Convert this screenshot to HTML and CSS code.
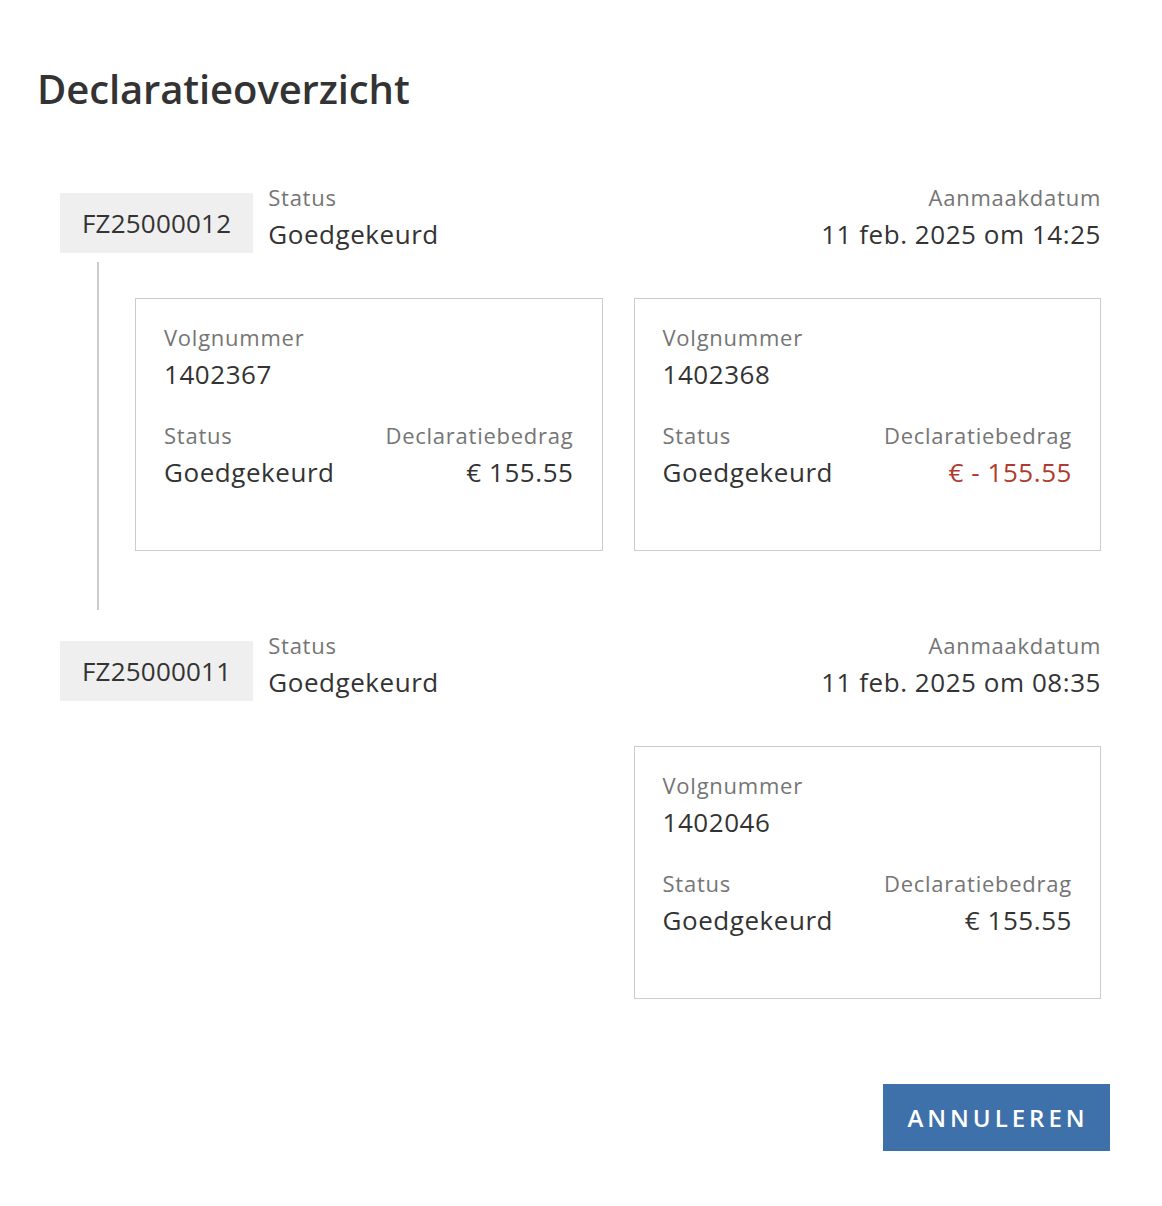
FILE: index.html
```html
<!DOCTYPE html>
<html lang="nl">
<head>
<meta charset="utf-8">
<title>Declaratieoverzicht</title>
<link rel="stylesheet" href="styles.css">
</head>
<body>
<div class="page">
  <h1 class="title">Declaratieoverzicht</h1>
  <div class="list">
    <div class="group">
      <div class="group-head">
        <div class="badge">FZ25000012</div>
        <div class="field status-field">
          <div class="label">Status</div>
          <div class="value">Goedgekeurd</div>
        </div>
        <div class="field date-field">
          <div class="label">Aanmaakdatum</div>
          <div class="value">11 feb. 2025 om 14:25</div>
        </div>
      </div>
      <div class="children">
        <div class="cards">
          <div class="card">
            <div class="label">Volgnummer</div>
            <div class="value">1402367</div>
            <div class="card-row">
              <div class="field">
                <div class="label">Status</div>
                <div class="value">Goedgekeurd</div>
              </div>
              <div class="field amount">
                <div class="label">Declaratiebedrag</div>
                <div class="value">€ 155.55</div>
              </div>
            </div>
          </div>
          <div class="card">
            <div class="label">Volgnummer</div>
            <div class="value">1402368</div>
            <div class="card-row">
              <div class="field">
                <div class="label">Status</div>
                <div class="value">Goedgekeurd</div>
              </div>
              <div class="field amount">
                <div class="label">Declaratiebedrag</div>
                <div class="value negative">€ - 155.55</div>
              </div>
            </div>
          </div>
        </div>
      </div>
    </div>
    <div class="group last">
      <div class="group-head">
        <div class="badge">FZ25000011</div>
        <div class="field status-field">
          <div class="label">Status</div>
          <div class="value">Goedgekeurd</div>
        </div>
        <div class="field date-field">
          <div class="label">Aanmaakdatum</div>
          <div class="value">11 feb. 2025 om 08:35</div>
        </div>
      </div>
      <div class="children">
        <div class="cards">
          <div class="card col-2">
            <div class="label">Volgnummer</div>
            <div class="value">1402046</div>
            <div class="card-row">
              <div class="field">
                <div class="label">Status</div>
                <div class="value">Goedgekeurd</div>
              </div>
              <div class="field amount">
                <div class="label">Declaratiebedrag</div>
                <div class="value">€ 155.55</div>
              </div>
            </div>
          </div>
        </div>
      </div>
    </div>
  </div>
  <div class="footer">
    <button class="btn" type="button">ANNULEREN</button>
  </div>
</div>
</body>
</html>
```

FILE: styles.css
```css
* { box-sizing: border-box; }
html, body { margin: 0; padding: 0; background: #fff; }
body {
  font-family: "Open Sans", "Liberation Sans", sans-serif;
  color: #333;
}
.page {
  padding: 64px 61px 40px 37px;
}
.title {
  margin: 0;
  font-size: 40px;
  line-height: 50px;
  font-weight: 600;
  letter-spacing: -0.1px;
  color: #333;
}
.list {
  margin-top: 66px;
  padding-left: 23px;
}
.group + .group { margin-top: 18px; }
.group-head {
  display: flex;
  align-items: flex-start;
}
.badge {
  margin-top: 13px;
  height: 60px;
  line-height: 60px;
  padding: 0 22px;
  background: #efefef;
  font-size: 26px;
  letter-spacing: 0.2px;
  color: #333;
}
.status-field { margin-left: 15px; }
.date-field { margin-left: auto; text-align: right; }
.label {
  font-size: 22px;
  line-height: 34px;
  letter-spacing: 0.75px;
  color: #757575;
}
.value {
  font-size: 26px;
  line-height: 40px;
  letter-spacing: 0.55px;
  color: #333;
}
.value.negative { color: #b03a30; }
.children {
  margin-top: 8px;
  margin-left: 37px;
  border-left: 2px solid #cccccc;
  padding: 36px 0 59px 36px;
}
.group.last .children { border-left-color: transparent; }
.cards {
  display: grid;
  grid-template-columns: 1fr 1fr;
  column-gap: 31px;
}
.card {
  border: 1px solid #cccccc;
  padding: 21px 28px 58px 28px;
}
.card.col-2 { grid-column: 2; }
.card-row {
  margin-top: 24px;
  display: flex;
  justify-content: space-between;
}
.amount { text-align: right; }
.footer {
  display: flex;
  justify-content: flex-end;
  margin-top: 26px;
  margin-right: -9px;
}
.btn {
  height: 67px;
  width: 227px;
  border: 0;
  border-radius: 0;
  background: #3e71a9;
  color: #fff;
  font-family: "Open Sans", "Liberation Sans", sans-serif;
  font-size: 24px;
  font-weight: 600;
  letter-spacing: 4px;
  padding: 0 0 0 3px;
  cursor: pointer;
}
```
